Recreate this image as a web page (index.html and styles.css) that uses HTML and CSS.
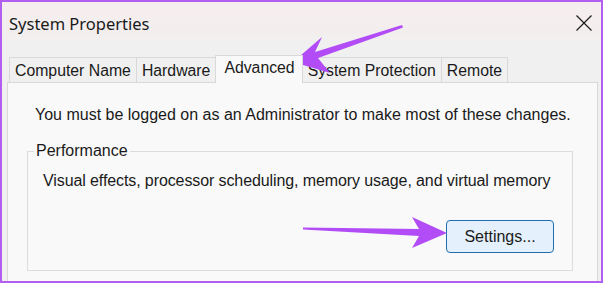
FILE: index.html
```html
<!DOCTYPE html>
<html lang="en">

<head>
    <meta charset="UTF-8">
    <meta name="viewport" content="width=device-width, initial-scale=1.0">
    <title>System Properties</title>
    <link rel="stylesheet" href="styles.css">
</head>

<body>
    <div class="window">
        <!-- Title bar -->
        <div class="titlebar">
            <span class="title">System Properties</span>
            <svg class="close" width="16" height="16" viewBox="0 0 16 16">
                <path d="M0.5 0.5 L15.5 15.5 M15.5 0.5 L0.5 15.5" stroke="#1a1a1a" stroke-width="1.2" fill="none" />
            </svg>
        </div>

        <!-- Tabs -->
        <div class="tabs">
            <div class="tab">Computer Name</div>
            <div class="tab">Hardware</div>
            <div class="tab active">Advanced</div>
            <div class="tab">System Protection</div>
            <div class="tab">Remote</div>
        </div>

        <!-- Advanced page -->
        <div class="panel">
            <p class="note">You must be logged on as an Administrator to make most of these changes.</p>
            <fieldset class="group">
                <legend>Performance</legend>
                <p class="desc">Visual effects, processor scheduling, memory usage, and virtual memory</p>
                <div class="actions">
                    <button class="btn">Settings...</button>
                </div>
            </fieldset>
        </div>

        <!-- annotation arrows -->
        <svg class="arrows" width="603" height="283" viewBox="0 0 603 283">
            <path d="M293 62 L322 37 L315 52 L402 25 L403 27.5 L318 58 L330 73 Z" fill="#b24cf6" />
            <path d="M447 233 L412 217 L419 229 L303 227.5 L303 229.5 L419 236 L412 248 Z" fill="#b24cf6" />
        </svg>
    </div>
</body>

</html>
```

FILE: styles.css
```css
body {
    margin: 0;
    font-family: "Liberation Sans", Arial, sans-serif;
    color: #1a1a1a;
}

.window {
    position: relative;
    width: 603px;
    height: 283px;
    box-sizing: border-box;
    border: 2px solid #b25ef0;
    background-color: #f0f0f0;
    overflow: hidden;
}

.titlebar {
    display: flex;
    justify-content: space-between;
    align-items: center;
    height: 42px;
    padding: 0 9px 0 7px;
    background: linear-gradient(#f6eeee, #f3eeee 70%, #f0f0f0);
}

.title {
    font-family: "Noto Sans", "Open Sans", sans-serif;
    font-size: 16.5px;
    color: #1a1a1a;
}

.tabs {
    display: flex;
    align-items: flex-end;
    height: 38px;
    padding-left: 7px;
    font-size: 15.8px;
}

.tab {
    height: 24px;
    line-height: 25px;
    padding: 0 5px;
    border: 1px solid #d9d9d9;
    border-bottom: none;
    border-right: none;
    background-color: #f0f0f0;
}

.tab:last-child {
    border-right: 1px solid #d9d9d9;
}

.tab.active {
    height: 27px;
    line-height: 24px;
    margin-bottom: -1px;
    padding: 0 7px 0 8px;
    background-color: #f9f9f9;
    border-right: 1px solid #d9d9d9;
    position: relative;
    z-index: 1;
}

.tab.active + .tab {
    border-left: none;
}

.panel {
    margin: 0 3px 0 5px;
    height: 220px;
    border: 1px solid #d9d9d9;
    background-color: #f9f9f9;
    padding: 22px 24px 0 19px;
    font-size: 16px;
}

.note {
    margin: 0 0 17px 8px;
    line-height: 20px;
}

.group {
    margin: 0;
    min-width: 0;
    padding: 11px 18px 17px 15px;
    border: 1px solid #dcdcdc;
}

.group legend {
    margin-left: -9px;
    padding: 0 2px;
    line-height: 18px;
}

.desc {
    margin: 0;
    line-height: 20px;
    white-space: nowrap;
    letter-spacing: -0.1px;
}

.actions {
    display: flex;
    justify-content: flex-end;
    margin-top: 29px;
}

.btn {
    width: 108px;
    height: 33px;
    font-family: "Liberation Sans", Arial, sans-serif;
    font-size: 16px;
    color: #1a1a1a;
    background-color: #e4f0fb;
    border: 1px solid #1f6fb0;
    border-radius: 4px;
}

.arrows {
    position: absolute;
    left: -2px;
    top: -2px;
    pointer-events: none;
}
```
